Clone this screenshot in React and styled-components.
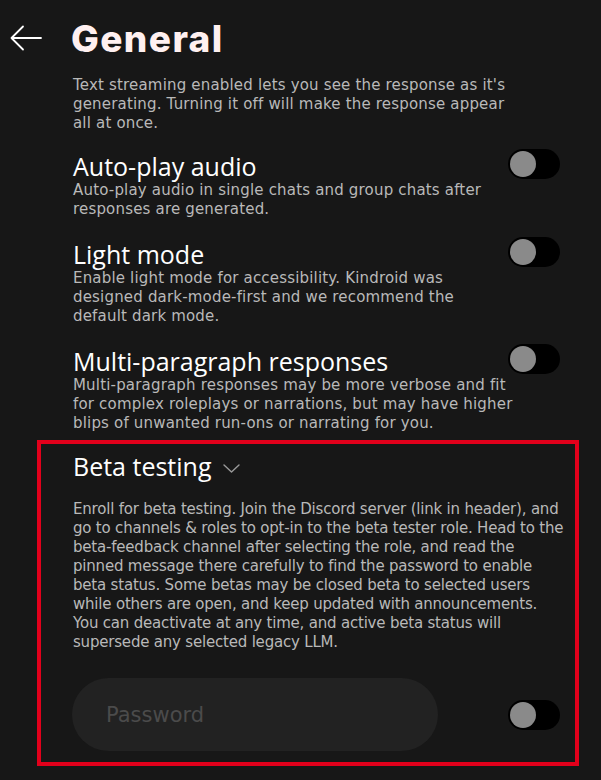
import { useState } from "react";
import styled, { createGlobalStyle } from "styled-components";

const GlobalStyle = createGlobalStyle`
  body {
    margin: 0;
    background: #171717;
  }
`;

const intro = [
  "Text streaming enabled lets you see the response as it's",
  "generating. Turning it off will make the response appear",
  "all at once.",
];

const settings = [
  {
    title: "Auto-play audio",
    lines: [
      "Auto-play audio in single chats and group chats after",
      "responses are generated.",
    ],
  },
  {
    title: "Light mode",
    lines: [
      "Enable light mode for accessibility. Kindroid was",
      "designed dark-mode-first and we recommend the",
      "default dark mode.",
    ],
  },
  {
    title: "Multi-paragraph responses",
    lines: [
      "Multi-paragraph responses may be more verbose and fit",
      "for complex roleplays or narrations, but may have higher",
      "blips of unwanted run-ons or narrating for you.",
    ],
  },
];

const betaLines = [
  "Enroll for beta testing. Join the Discord server (link in header), and",
  "go to channels & roles to opt-in to the beta tester role. Head to the",
  "beta-feedback channel after selecting the role, and read the",
  "pinned message there carefully to find the password to enable",
  "beta status. Some betas may be closed beta to selected users",
  "while others are open, and keep updated with announcements.",
  "You can deactivate at any time, and active beta status will",
  "supersede any selected legacy LLM.",
];

const Toggle = ({ on, onClick }) => (
  <Track $on={on} onClick={onClick}>
    <Knob $on={on} />
  </Track>
);

const Lines = ({ lines }) =>
  lines.map((l) => <Line key={l}>{l}</Line>);

const App = () => {
  const [toggles, setToggles] = useState({});
  const flip = (k) => setToggles((t) => ({ ...t, [k]: !t[k] }));

  return (
    <Page>
      <GlobalStyle />
      <Header>
        <BackButton aria-label="back">
          <svg width="32" height="26" viewBox="0 0 32 26" fill="none">
            <path
              d="M31 13H1.5M13 1.5L1.5 13L13 24.5"
              stroke="#fff"
              strokeWidth="1.8"
              strokeLinecap="round"
              strokeLinejoin="round"
            />
          </svg>
        </BackButton>
        <Title>General</Title>
      </Header>

      <Content>
        <Intro>
          <Lines lines={intro} />
        </Intro>

        {settings.map((s) => (
          <Row key={s.title}>
            <div>
              <Heading>{s.title}</Heading>
              <Desc>
                <Lines lines={s.lines} />
              </Desc>
            </div>
            <Toggle on={toggles[s.title]} onClick={() => flip(s.title)} />
          </Row>
        ))}
      </Content>

      <BetaBox>
        <BetaHead>
          <Heading>Beta testing</Heading>
          <svg width="17" height="9" viewBox="0 0 17 9" fill="none">
            <path
              d="M1 1l7.5 7 7.5-7"
              stroke="#9a9a9a"
              strokeWidth="1.4"
              strokeLinecap="round"
              strokeLinejoin="round"
            />
          </svg>
        </BetaHead>
        <BetaText>
          <Lines lines={betaLines} />
        </BetaText>
        <PasswordRow>
          <PasswordInput type="password" placeholder="Password" />
          <Toggle on={toggles.beta} onClick={() => flip("beta")} />
        </PasswordRow>
      </BetaBox>
    </Page>
  );
};

export default App;

const Page = styled.div`
  min-height: 780px;
  background: #171717;
  font-family: "Open Sans", sans-serif;
  overflow: hidden;
`;

const Header = styled.div`
  display: flex;
  align-items: center;
  gap: 29px;
  padding: 9px 0 9px 10px;
  height: 76px;
  box-sizing: border-box;
`;

const BackButton = styled.button`
  display: flex;
  padding: 0;
  border: 0;
  background: none;
  cursor: pointer;
`;

const Title = styled.h1`
  margin: 0;
  font-family: Inter, sans-serif;
  font-weight: 800;
  font-size: 37px;
  letter-spacing: 1.4px;
  color: #fff0f0;
`;

const Content = styled.div`
  padding: 0 41px 0 73px;
  display: flex;
  flex-direction: column;
  gap: 20px;
`;

const Intro = styled.p`
  margin: 0 0 -2px;
  font-family: "DejaVu Sans", sans-serif;
  font-size: 15px;
  letter-spacing: 0.18px;
  line-height: 19px;
  color: #b9b9b9;
`;

const Desc = styled(Intro)`
  margin: 0;
`;

const Line = styled.span`
  display: block;
  white-space: nowrap;
`;

const Row = styled.div`
  display: grid;
  grid-template-columns: minmax(0, 1fr) 52px;
  align-items: start;
`;

const Heading = styled.h2`
  margin: 0;
  font-family: "Open Sans", sans-serif;
  font-weight: 400;
  font-size: 25px;
  line-height: 30px;
  color: #fff;
`;

const Track = styled.div`
  width: 52px;
  height: 30px;
  margin-top: -2px;
  border-radius: 15px;
  background: #000;
  display: flex;
  align-items: center;
  padding: 0 2px;
  box-sizing: border-box;
  justify-content: ${(p) => (p.$on ? "flex-end" : "flex-start")};
  cursor: pointer;
`;

const Knob = styled.div`
  width: 26px;
  height: 26px;
  border-radius: 50%;
  background: ${(p) => (p.$on ? "#fff" : "#8a8a8a")};
`;

const BetaBox = styled.div`
  margin: 7px 22px 0 37px;
  border: 4px solid #e2001b;
  padding: 7px 15px 11px 32px;
`;

const BetaHead = styled.div`
  display: flex;
  align-items: center;
  gap: 12px;

  svg {
    margin-top: 4px;
  }
`;

const BetaText = styled(Intro)`
  margin: 19px 0 0;
  letter-spacing: -0.2px;
`;

const PasswordRow = styled.div`
  display: flex;
  align-items: center;
  justify-content: space-between;
  margin-top: 26px;
  margin-left: -1px;

  ${Track} {
    margin-top: 0;
  }
`;

const PasswordInput = styled.input`
  width: 366px;
  height: 73px;
  box-sizing: border-box;
  border: 0;
  outline: none;
  border-radius: 37px;
  background: #222;
  padding: 0 0 0 34px;
  font-family: "DejaVu Sans", sans-serif;
  font-size: 21px;
  color: #ddd;

  &::placeholder {
    color: #4b4b4b;
  }
`;
